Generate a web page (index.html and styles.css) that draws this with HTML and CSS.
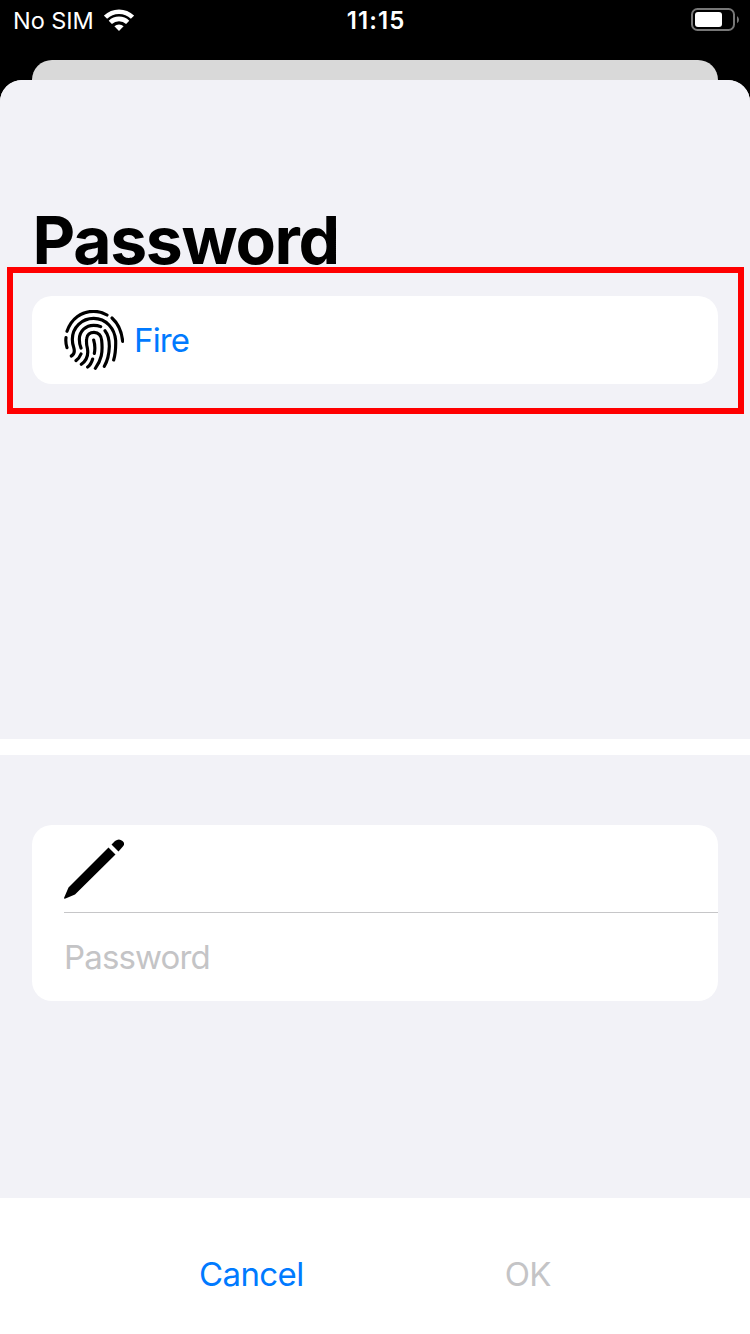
FILE: index.html
```html
<!DOCTYPE html>
<html lang="en">
<head>
<meta charset="utf-8">
<title>Password</title>
<link rel="stylesheet" href="styles.css">
</head>
<body>
<div class="screen">
  <header class="status">
    <div class="carrier"><span class="carrier-name">No SIM</span>
      <svg class="wifi" viewBox="0 0 30 22" width="30" height="22"><g fill="none" stroke="#fff" stroke-width="4.600"><path d="M1.500 8.200a19.3 19.3 0 0 1 27 0"/><path d="M6.300 13.400a12.500 12.500 0 0 1 17.400 0"/></g><path fill="#fff" d="M15 22l-4.600-4.700a6.600 6.600 0 0 1 9.200 0z"/></svg>
    </div>
    <time class="clock">11:15</time>
    <div class="battery">
      <svg viewBox="0 0 48 24" width="48" height="24"><rect x="1" y="1" width="42" height="21" rx="5.5" fill="none" stroke="#777" stroke-width="2"/><rect x="4" y="4" width="27" height="15" rx="3" fill="#fff"/><path fill="#777" d="M46 8q2 1.500 2 3.700t-2 3.600z"/></svg>
    </div>
  </header>
  <div class="back-sheet"></div>
  <main class="sheet">
    <section class="choices">
      <h1 class="title">Password</h1>
      <div class="highlight">
        <div class="row-card">
          <svg class="finger" viewBox="24 24 180 180" width="60" height="60" fill="none" stroke="#000" stroke-width="9.500" stroke-linecap="round"><path d="M33 88C46 49 77 28 113 28Q134 28 153 39M168 48C187 65 197 87 200 118M30 107Q28 122 33 137M46 162C56 157 57 149 53 136C50 127 49 119 49 112C49 76 78 49 113 49C151 49 176 80 179 115Q180 150 173 174M60 176Q69 170 75 156M75 138Q70 127 70 112C70 87 90 70 113 70Q125 70 134 74M147 86C159 101 160 116 160 133Q159 168 145 193M76 187C94 174 98 158 94 138C91 127 91 119 92 110C93 98 102 91 114 91C128 91 136 101 137 115C141 152 136 175 118 199M95 195Q105 188 110 171M113 114Q119 134 115 154"/></svg>
          <span class="link fire">Fire</span>
        </div>
      </div>
    </section>
    <section class="entry">
      <div class="form-card">
        <div class="pencil-row"><svg viewBox="0 0 60 60" width="60" height="60"><path d="M0 59L4.500 48.500 44.500 8.500 51.500 15.500 11 55.500 1.500 59.500Q0 60 0 59zM47.500 5.500L51 2Q55-1 58.500 2T58 8.500L54.500 12.500z"/></svg></div>
        <div class="input-row"><span class="placeholder">Password</span></div>
      </div>
    </section>
    <footer class="actions"><span class="link cancel">Cancel</span><span class="ok">OK</span></footer>
  </main>
</div>
</body>
</html>
```
FILE: styles.css
```css
* { box-sizing: border-box; }
body { margin: 0; background: #000; font-family: Inter, "Liberation Sans", sans-serif; }
.screen { width: 750px; height: 1334px; display: flex; flex-direction: column; overflow: hidden; }
.status { height: 60px; padding: 8px 11px 0 13px; display: grid; grid-template-columns: 1fr auto 1fr; align-items: start; color: #fff; }
.carrier { display: flex; gap: 10px; }
.carrier-name { font-size: 23.5px; line-height: 26px; letter-spacing: -.05px; }
.wifi { margin-top: 1px; }
.clock { font-size: 24px; line-height: 26px; font-weight: 600; letter-spacing: 1.1px; }
.battery { justify-self: end; height: 24px; }
.back-sheet { height: 20px; margin: 0 32px; background: #d9d9d9; border-radius: 20px 20px 0 0; }
.sheet { flex: 1; display: flex; flex-direction: column; background: #fff; border-radius: 22px 22px 0 0; overflow: hidden; }
.choices { height: 659px; padding: 121px 6px 0 7px; background: #f2f2f7; }
.title { margin: 0 0 0 25.5px; height: 66px; line-height: 78px; font-size: 66px; font-weight: 700; letter-spacing: -1.3px; }
.highlight { height: 147px; padding: 23px 20px 0 19px; border: 6px solid #f00; }
.row-card { height: 88px; padding-left: 32px; display: flex; align-items: center; gap: 10px; background: #fff; border-radius: 20px; }
.link { color: #007aff; }
.fire, .placeholder, .actions { font-size: 33px; line-height: 40px; letter-spacing: -.85px; }
.entry { height: 443px; margin-top: 16px; padding: 70px 32px 0; background: #f2f2f7; }
.form-card { height: 176px; padding-left: 32px; background: #fff; border-radius: 20px; }
.pencil-row { height: 88px; padding-top: 14px; border-bottom: 1px solid #c6c6c8; }
.input-row { height: 88px; display: flex; align-items: center; }
.placeholder, .ok { color: #c4c4c6; }
.actions { flex: 1; padding: 56px 0 0 199px; display: flex; gap: 201px; letter-spacing: -.6px; }
```
